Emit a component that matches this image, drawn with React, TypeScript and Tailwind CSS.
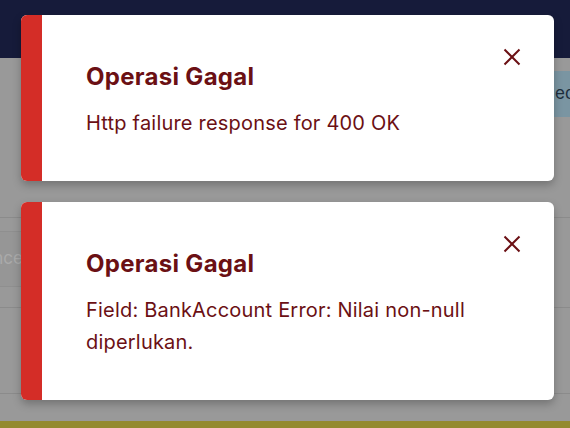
import React from "react";

function CloseIcon() {
  return (
    <svg width="18" height="18" viewBox="0 0 18 18" fill="none">
      <path d="M1.5 1.5L16.5 16.5M16.5 1.5L1.5 16.5" stroke="#6b1014" strokeWidth="2" strokeLinecap="butt" />
    </svg>
  );
}

function Toast({ title, body }: { title: string; body: string }) {
  return (
    <div className="relative flex w-[533px] overflow-hidden rounded-[6px] bg-white shadow-[0_4px_8px_rgba(0,0,0,0.25)]">
      <div className="w-[21px] shrink-0 bg-[#d42d27]" />
      <div className="flex flex-col pl-[44px] pr-[60px] pt-[48px] pb-[42px]">
        <div className="text-[24px] font-bold leading-[28px] tracking-[0.3px] text-[#6b1014]">{title}</div>
        <div className="mt-[16px] text-[20px] leading-[32px] tracking-[0.2px] text-[#6b1014]">{body}</div>
      </div>
      <button className="absolute right-[33px] top-[33px] flex h-[18px] w-[18px] items-center justify-center">
        <CloseIcon />
      </button>
    </div>
  );
}

export default function App() {
  return (
    <div
      className="relative h-[428px] w-[570px] overflow-hidden bg-[#999999]"
      style={{ fontFamily: "Inter, Roboto, 'Noto Sans', sans-serif" }}
    >
      {/* background page */}
      <div className="flex h-full flex-col">
        <div className="h-[58px] shrink-0 bg-[#161b3a]" />
        <div className="flex h-[13px] shrink-0" />
        <div className="flex h-[46px] shrink-0 justify-end">
          <div className="flex w-[16px] items-center overflow-hidden whitespace-nowrap bg-[#7a95a2] pl-[1px] text-[17px] text-[#1c2d3c]">
            ed
          </div>
        </div>
        <div className="h-[100px] shrink-0" />
        <div className="h-px shrink-0 bg-[#8b8b8b]" />
        <div className="h-[13px] shrink-0" />
        <div className="flex h-[56px] shrink-0">
          <div className="flex w-[23px] items-center justify-end overflow-hidden whitespace-nowrap border-y border-[#8f8f8f] bg-[#969696] text-[17px] text-[#aaaaaa]">
            nce
          </div>
        </div>
        <div className="h-[20px] shrink-0" />
        <div className="h-px shrink-0 bg-[#8b8b8b]" />
        <div className="h-[85px] shrink-0" />
        <div className="h-px shrink-0 bg-[#8b8b8b]" />
        <div className="grow" />
        <div className="h-[7px] shrink-0 bg-[#948a30]" />
      </div>

      {/* toasts */}
      <div className="absolute left-[21px] top-[15px] flex flex-col gap-[21px]">
        <Toast title="Operasi Gagal" body="Http failure response for 400 OK" />
        <Toast title="Operasi Gagal" body="Field: BankAccount Error: Nilai non-null diperlukan." />
      </div>
    </div>
  );
}
